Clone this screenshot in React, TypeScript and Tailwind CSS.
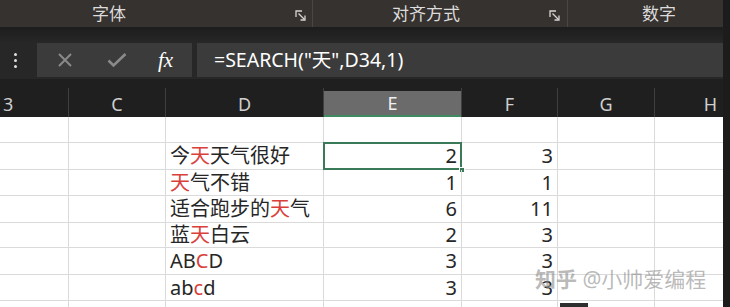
import React from "react";

const cols = [
  { key: "B", label: "3", w: "w-[69px]", align: "justify-start pl-[3px]" },
  { key: "C", label: "C", w: "w-[97px]", align: "justify-center" },
  { key: "D", label: "D", w: "w-[158px]", align: "justify-center" },
  { key: "E", label: "E", w: "w-[138px]", align: "justify-center" },
  { key: "F", label: "F", w: "w-[96px]", align: "justify-center" },
  { key: "G", label: "G", w: "w-[97px]", align: "justify-center" },
  { key: "H", label: "H", w: "w-[68px]", align: "justify-end pr-[6px]" },
];

const red = "text-[#d9403a]";

const rows: { h: string; d?: React.ReactNode; e?: string; f?: string }[] = [
  { h: "h-[26px]" },
  {
    h: "h-[27px]",
    d: (
      <>
        今<span className={red}>天</span>天气很好
      </>
    ),
    e: "2",
    f: "3",
  },
  {
    h: "h-[26px]",
    d: (
      <>
        <span className={red}>天</span>气不错
      </>
    ),
    e: "1",
    f: "1",
  },
  {
    h: "h-[27px]",
    d: (
      <>
        适合跑步的<span className={red}>天</span>气
      </>
    ),
    e: "6",
    f: "11",
  },
  {
    h: "h-[25px]",
    d: (
      <>
        蓝<span className={red}>天</span>白云
      </>
    ),
    e: "2",
    f: "3",
  },
  {
    h: "h-[27px]",
    d: (
      <>
        AB<span className={red}>C</span>D
      </>
    ),
    e: "3",
    f: "3",
  },
  {
    h: "h-[26px]",
    d: (
      <>
        ab<span className={red}>c</span>d
      </>
    ),
    e: "3",
    f: "3",
  },
  { h: "h-[10px]" },
];

function Launcher() {
  return (
    <svg width="12" height="12" viewBox="0 0 12 12" fill="none" stroke="#d6d6d6" strokeWidth="1.3">
      <path d="M1 7V1h6" />
      <path d="M3.5 3.5l6 6" />
      <path d="M10 5.5V10H5.5" />
    </svg>
  );
}

export default function App() {
  const cjk = "font-['Noto_Sans','Noto_Sans_CJK_SC',sans-serif]";
  return (
    <div className={`w-[730px] h-[307px] overflow-hidden flex bg-[#1c1c1c] ${cjk}`}>
      <div className="w-[723px] flex flex-col">
        {/* ribbon group labels */}
        <div className="h-[27px] shrink-0 flex bg-[#36322f] text-[#dcdcdc] text-[17px]">
          <div className="w-[312px] flex items-center">
            <span className="ml-[92px]">字体</span>
            <span className="ml-auto mr-[5px] mt-[4px]">
              <Launcher />
            </span>
          </div>
          <div className="w-px bg-[#4a4643]" />
          <div className="w-[254px] flex items-center">
            <span className="ml-[79px]">对齐方式</span>
            <span className="ml-auto mr-[6px] mt-[4px]">
              <Launcher />
            </span>
          </div>
          <div className="w-px bg-[#4a4643]" />
          <div className="flex-1 flex items-center">
            <span className="ml-[74px]">数字</span>
          </div>
        </div>
        <div className="h-[14px] shrink-0 bg-gradient-to-b from-[#1d1d1d] to-[#262626]" />

        {/* formula bar */}
        <div className="h-[38px] shrink-0 flex items-center bg-[#272727]">
          <div className="w-[37px] flex justify-center">
            <div className="flex flex-col gap-[3px] -ml-[6px]">
              <div className="w-[3px] h-[3px] rounded-full bg-[#e0e0e0]" />
              <div className="w-[3px] h-[3px] rounded-full bg-[#e0e0e0]" />
              <div className="w-[3px] h-[3px] rounded-full bg-[#e0e0e0]" />
            </div>
          </div>
          <div className="w-[155px] h-[34px] bg-[#3b3b3b] flex items-center">
            <svg className="ml-[21px]" width="14" height="14" viewBox="0 0 14 14" stroke="#8a8a8a" strokeWidth="2">
              <path d="M1 1l12 12M13 1L1 13" />
            </svg>
            <svg className="ml-[35px]" width="20" height="16" viewBox="0 0 20 16" fill="none" stroke="#8a8a8a" strokeWidth="2.6">
              <path d="M1.5 8.5l5 5L18.5 2" />
            </svg>
            <span className="ml-[31px] text-white text-[21px] italic font-['Liberation_Serif',serif] leading-none">
              fx
            </span>
          </div>
          <div className="w-[5px]" />
          <div className="flex-1 h-[34px] bg-[#3b3b3b] flex items-center pl-[17px] text-white text-[19.5px]">
            =SEARCH("天",D34,1)
          </div>
        </div>

        {/* column headers */}
        <div className="h-[38px] shrink-0 flex items-end bg-[#1f1f1f]">
          {cols.map((c) => (
            <div
              key={c.key}
              className={`${c.w} h-[29px] flex items-end border-r border-[#3f3f3f] last:border-r-0`}
            >
              <div
                className={`w-full h-[26px] flex items-center ${c.align} text-[18px] text-[#cfcfcf] ${
                  c.key === "E" ? "bg-[#6b6b6b] border-b-2 border-[#3f8a62] text-[#f0f0f0]" : ""
                }`}
              >
                {c.label}
              </div>
            </div>
          ))}
        </div>

        {/* grid */}
        <div className="flex-1 bg-white relative">
          {rows.map((r, i) => (
            <div key={i} className={`${r.h} shrink-0 flex border-b border-[#dadada]`}>
              {cols.map((c) => (
                <div
                  key={c.key}
                  className={`${c.w} h-full border-r border-[#dadada] last:border-r-0 flex items-center text-[20px] text-[#262626] relative`}
                >
                  {c.key === "D" && r.d && <span className="pl-[4px] whitespace-nowrap">{r.d}</span>}
                  {c.key === "E" && r.e && <span className="ml-auto pr-[4px]">{r.e}</span>}
                  {c.key === "F" && r.f && <span className="ml-auto pr-[4px]">{r.f}</span>}
                  {c.key === "E" && i === 1 && (
                    <>
                      <div className="absolute -left-px -top-px right-[-1px] bottom-[-1px] border-2 border-[#3a7a58]" />
                      <div className="absolute right-[-4px] bottom-[-4px] w-[6px] h-[6px] bg-[#3a7a58] border border-white" />
                    </>
                  )}
                </div>
              ))}
            </div>
          ))}
          <div className="absolute left-[560px] top-[186px] w-[28px] h-[6px] bg-[#2e2e2e]" />
          <div className="absolute left-[535px] top-[147px] text-[21px] text-[#8c8c8c]/60 whitespace-nowrap">
            <span className="font-bold">知乎</span> @小帅爱编程
          </div>
        </div>
      </div>
      <div className="flex-1 bg-[#1c1c1c]" />
    </div>
  );
}
